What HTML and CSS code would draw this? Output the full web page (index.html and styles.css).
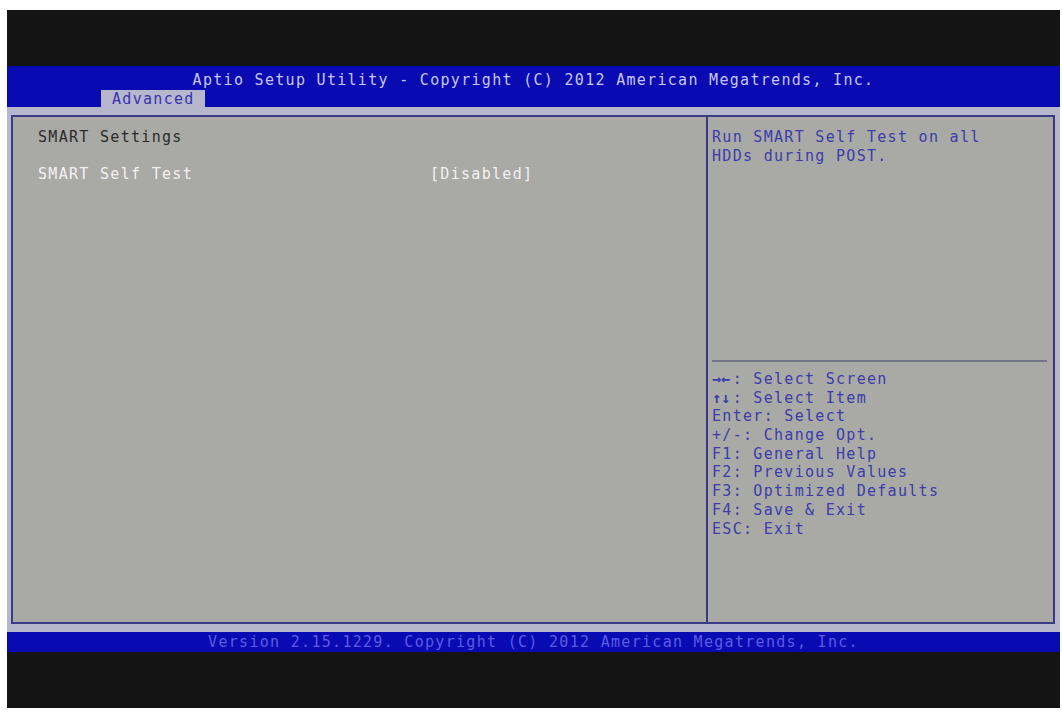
FILE: index.html
```html
<!DOCTYPE html>
<html lang="en">
<head>
  <meta charset="UTF-8" />
  <title>Aptio Setup Utility - Advanced</title>
  <link rel="stylesheet" href="styles.css">
</head>
<body>
  <div class="screen">
    <div class="blackbar"></div>

    <div class="titlebar">
      <div class="title">Aptio Setup Utility - Copyright (C) 2012 American Megatrends, Inc.</div>
      <div class="tabs">
        <span class="tab">Advanced</span>
      </div>
    </div>

    <div class="main">
      <div class="panel">
        <div class="settings">
          <div class="row heading">SMART Settings</div>
          <div class="row blank"></div>
          <div class="row item selected">
            <span class="label">SMART Self Test</span>
            <span class="value">[Disabled]</span>
          </div>
        </div>

        <div class="help">
          <div class="help-text">
            <div class="row">Run SMART Self Test on all</div>
            <div class="row">HDDs during POST.</div>
          </div>
          <div class="keys">
            <div class="row"><span class="arrows">→←</span>: Select Screen</div>
            <div class="row"><span class="arrows">↑↓</span>: Select Item</div>
            <div class="row">Enter: Select</div>
            <div class="row">+/-: Change Opt.</div>
            <div class="row">F1: General Help</div>
            <div class="row">F2: Previous Values</div>
            <div class="row">F3: Optimized Defaults</div>
            <div class="row">F4: Save &amp; Exit</div>
            <div class="row">ESC: Exit</div>
          </div>
        </div>
      </div>
    </div>

    <div class="footer">Version 2.15.1229. Copyright (C) 2012 American Megatrends, Inc.</div>
    <div class="blackbar bottom"></div>
  </div>
</body>
</html>
```

FILE: styles.css
```css
html, body {
  margin: 0;
  background: #ffffff;
}
body {
  padding: 10px 2px 4px 7px;
  font-family: "DejaVu Sans Mono", "Liberation Mono", monospace;
  font-size: 15px;
  letter-spacing: 1.3px;
}
.screen {
  width: 1053px;
  height: 698px;
  display: flex;
  flex-direction: column;
  background: #141414;
}
.blackbar {
  height: 56px;
  background: #141414;
}
.blackbar.bottom {
  height: 56px;
}
.row {
  height: 18.7px;
  line-height: 18.7px;
  white-space: pre;
}

/* top blue band */
.titlebar {
  height: 41px;
  background: #0a0ab2;
  display: flex;
  flex-direction: column;
}
.title {
  color: #c6c6f4;
  text-align: center;
  line-height: 19px;
  padding-top: 5px;
}
.tabs {
  margin-top: auto;
  padding-left: 94px;
  display: flex;
}
.tab {
  height: 18px;
  line-height: 19px;
  padding: 0 10px 0 11px;
  background: #b6b6cc;
  color: #3434b0;
}

/* main area */
.main {
  flex: 1;
  background: #b6b6cc;
  padding: 8px 5px 8px 4px;
  display: flex;
}
.panel {
  flex: 1;
  display: flex;
  border: 2px solid #3a3a86;
  background: #a9a9a5;
}
.settings {
  width: 668px;
  padding: 11px 0 0 25px;
  color: #2c2c2c;
}
.item {
  display: flex;
}
.item .label {
  width: 392px;
}
.selected {
  color: #f2f2f2;
}
.help {
  flex: 1;
  border-left: 2px solid #3a3a86;
  padding: 11px 6px 0 4px;
  color: #3c3cac;
  display: flex;
  flex-direction: column;
}
.help-text {
  height: 232px;
  border-bottom: 2px solid #74748a;
}
.keys {
  padding-top: 8px;
}
.arrows {
  font-weight: bold;
  letter-spacing: 0;
  padding-right: 2.6px;
}

/* bottom blue band */
.footer {
  height: 20px;
  line-height: 20px;
  background: #0a0ab2;
  color: #5c5ce2;
  text-align: center;
}
```
